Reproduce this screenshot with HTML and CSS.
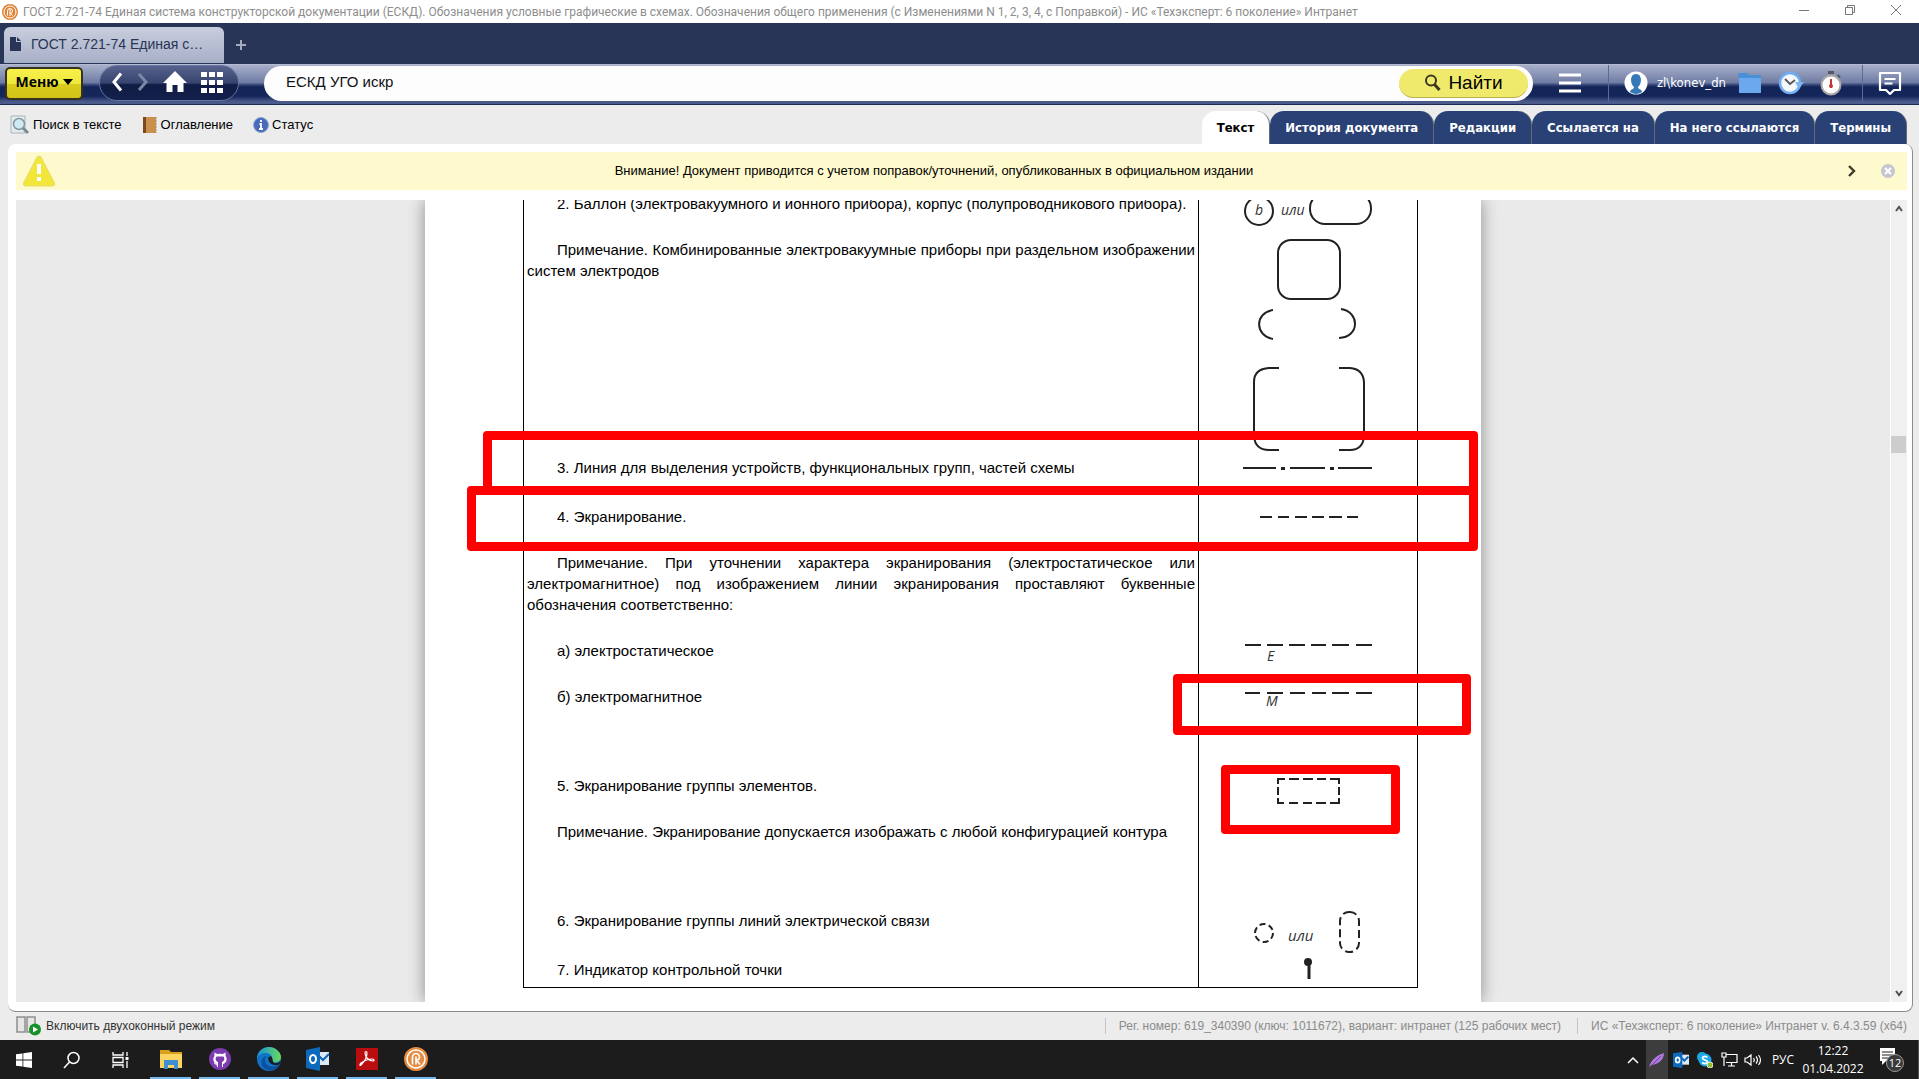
FILE: index.html
```html
<!DOCTYPE html>
<html lang="ru">
<head>
<meta charset="utf-8">
<meta name="viewport" content="width=device-width, initial-scale=1">
<title>ГОСТ 2.721-74 Единая система конструкторской документации (ЕСКД)</title>
<link rel="stylesheet" href="styles.css">
</head>
<body>
<header class="titlebar">
  <svg class="app-logo" width="16" height="16" viewBox="0 0 16 16" aria-hidden="true"><circle cx="8" cy="8" r="8" fill="#e0843a"/><circle cx="8" cy="8" r="6" fill="none" stroke="#fff" stroke-width="1"/><path d="M5.500 11.500V7a2.500 2.500 0 0 1 5 0q0 2-2 2l2 2.500M8 5v7" fill="none" stroke="#fff" stroke-width="1"/></svg>
  <h1 class="window-title">ГОСТ 2.721-74 Единая система конструкторской документации (ЕСКД). Обозначения условные графические в схемах. Обозначения общего применения (с Изменениями N 1, 2, 3, 4, с Поправкой) - ИС «Техэксперт: 6 поколение» Интранет</h1>
  <div class="window-controls">
    <button aria-label="Свернуть"><svg width="12" height="12" viewBox="0 0 12 12"><path d="M1 6.500h10" stroke="#777"/></svg></button>
    <button aria-label="Развернуть"><svg width="12" height="12" viewBox="0 0 12 12" fill="none" stroke="#777"><path d="M1.500 3.500h7v7h-7zM3.500 3.500v-2h7v7h-2"/></svg></button>
    <button aria-label="Закрыть"><svg width="12" height="12" viewBox="0 0 12 12"><path d="M1 1l10 10M11 1L1 11" stroke="#777"/></svg></button>
  </div>
</header>

<nav class="tabstrip" aria-label="Вкладки">
  <button class="app-tab"><svg width="11" height="14" viewBox="0 0 11 14"><path d="M0 0h6v5h5v9H0zM7 0l4 4H7z" fill="#283556"/></svg><span>ГОСТ 2.721-74 Единая с…</span></button>
  <button class="new-tab" aria-label="Новая вкладка"><svg width="12" height="12" viewBox="0 0 12 12"><path d="M6 1v10M1 6h10" stroke="#a5abba" stroke-width="2"/></svg></button>
</nav>

<div class="toolbar">
  <button class="menu-btn">Меню<svg width="10" height="6" viewBox="0 0 10 6"><path d="M0 0h10L5 6z" fill="#000"/></svg></button>
  <div class="nav-pill">
    <button aria-label="Назад"><svg width="12" height="20" viewBox="0 0 12 20"><path d="M10 1.500L3 10l7 8.500" fill="none" stroke="#fff" stroke-width="3"/></svg></button>
    <button aria-label="Вперёд"><svg width="12" height="20" viewBox="0 0 12 20"><path d="M2 2l7 8-7 8" fill="none" stroke="#7c87a8" stroke-width="3"/></svg></button>
    <button aria-label="Домой"><svg width="24" height="22" viewBox="0 0 24 22"><path d="M12 0l12 12h-3.500v9h-6v-7h-5v7h-6v-9H0z" fill="#fff"/></svg></button>
    <button aria-label="Разделы"><svg width="22" height="21" viewBox="0 0 22 21"><path d="M0 0h6v5H0zM8 0h6v5H8zM16 0h6v5h-6zM0 8h6v5H0zM8 8h6v5H8zM16 8h6v5h-6zM0 16h6v5H0zM8 16h6v5H8zM16 16h6v5h-6z" fill="#fff"/></svg></button>
  </div>
  <form class="search">
    <input type="text" value="ЕСКД УГО искр" aria-label="Поиск">
    <button type="button" class="find-btn"><svg width="18" height="18" viewBox="0 0 18 18"><circle cx="7" cy="6.500" r="5" fill="none" stroke="#3a3820" stroke-width="2"/><path d="M10.500 10.500l5 5.500" stroke="#3a3820" stroke-width="3"/></svg>Найти</button>
  </form>
  <button class="list-btn" aria-label="Список"><svg width="22" height="20" viewBox="0 0 22 20"><path d="M0 2h22M0 10h22M0 18h22" stroke="#fff" stroke-width="3"/></svg></button>
  <div class="user-box">
    <svg width="24" height="24" viewBox="0 0 24 24"><circle cx="12" cy="12" r="11.500" fill="#fff"/><path d="M6 21c0-3 4-2.500 4-5-4-3-4.500-13 2-13s6 10 2 13c0 2.500 4 2 4 5q-6 4-12 0z" fill="#3579b8"/></svg>
    <span class="user-name">zl\konev_dn</span>
    <button aria-label="Папки"><svg width="24" height="22" viewBox="0 0 24 22"><path d="M0 2q0-1 1-1h8l2 2h11q1 0 1 1v17H1V6z" fill="#4a90d9"/><path d="M1 6h22v14q0 1-1 1H2q-1 0-1-1z" fill="#6ba8ee"/></svg></button>
    <button aria-label="История"><svg width="26" height="24" viewBox="0 0 26 24"><circle cx="12" cy="12" r="10" fill="#f4f7fc" stroke="#6fabef" stroke-width="2.500"/><path d="M17 11h9l-5 7zM12 22q7 0 10-6" fill="#7db5f3"/><path d="M7 8l5 5 5-4" fill="none" stroke="#555" stroke-width="1.800"/></svg></button>
    <button aria-label="На контроле"><svg width="22" height="25" viewBox="0 0 22 25"><path d="M8 0h6v3H8zM18 3l3 3-2 1-2-2z" fill="#55565f"/><circle cx="11" cy="14" r="9.500" fill="#fff" stroke="#aaa6a6" stroke-width="2"/><path d="M11 8v9" stroke="#c33" stroke-width="2"/><circle cx="11" cy="15" r="2" fill="#c33"/></svg></button>
  </div>
  <button class="chat-btn" aria-label="Сообщения"><svg width="24" height="24" viewBox="0 0 24 24" fill="none" stroke="#fff" stroke-width="2.200"><path d="M2 2h20v17h-6l-4 4-4-4H2z" stroke-linejoin="round"/><path d="M6.500 8h11M6.500 12.500h8" stroke-width="2"/></svg></button>
</div>

<div class="doc-bar">
  <div class="doc-tools">
    <button><svg width="20" height="20" viewBox="0 0 20 20"><path d="M1 1h14v17H1z" fill="#e4ebec" stroke="#a9b5b8"/><circle cx="9" cy="9" r="5.500" fill="#cfeaf3" stroke="#84979f" stroke-width="1.500"/><path d="M13 13l5 5" stroke="#7b8a94" stroke-width="3"/></svg>Поиск в тексте</button>
    <button><svg width="16" height="18" viewBox="0 0 16 18"><path d="M1 1h13v16H1z" fill="#c98f4c"/><path d="M1 1h3v16H1z" fill="#7a4a1c"/><path d="M14.500 1v16" stroke="#c8bca8" stroke-dasharray="2 1"/></svg>Оглавление</button>
    <button><svg width="16" height="16" viewBox="0 0 16 16"><circle cx="8" cy="8" r="7.500" fill="#4a6cb8" stroke="#8ea6d6"/><path d="M8 3v2M6.500 7H8v5M6 12h4" stroke="#fff" stroke-width="1.800" fill="none"/></svg>Статус</button>
  </div>
  <nav class="doc-tabs" aria-label="Разделы документа">
    <button class="active">Текст</button>
    <button>История документа</button>
    <button>Редакции</button>
    <button>Ссылается на</button>
    <button>На него ссылаются</button>
    <button>Термины</button>
  </nav>
</div>

<main class="panel">
  <div class="notice">
    <svg width="34" height="32" viewBox="0 0 34 32"><path d="M17 1q2 0 3 3l12 23q2 4-2 4H4q-4 0-2-4L14 4q1-3 3-3z" fill="#f3e63a" stroke="#e6dc6e"/><path d="M15 9h4v10h-4zM15 22h4v4h-4z" fill="#fff"/></svg>
    <p>Внимание! Документ приводится с учетом поправок/уточнений, опубликованных в официальном издании</p>
    <button aria-label="Далее"><svg width="10" height="12" viewBox="0 0 10 12"><path d="M2 1l5 5-5 5" fill="none" stroke="#3d3a2c" stroke-width="2.400"/></svg></button>
    <button aria-label="Закрыть уведомление"><svg width="16" height="16" viewBox="0 0 16 16"><circle cx="8" cy="8" r="7" fill="#c3c6cf"/><path d="M5 5l6 6M11 5l-6 6" stroke="#fff" stroke-width="2.200"/></svg></button>
  </div>
  <div class="viewer">
    <div class="canvas">
      <article class="page">
        <table class="symbols">
          <tbody>
          <tr class="row-balloon">
            <td><p>2. Баллон (электровакуумного и ионного прибора), корпус (полупроводникового прибора).</p><p>Примечание. Комбинированные электровакуумные приборы при раздельном изображении систем электродов</p></td>
            <td><svg class="figure" width="218" height="262" viewBox="0 0 218 262"><circle cx="60" cy="19" r="14"/><text x="56" y="23">b</text><text x="82" y="23">или</text><rect x="111" y="1" width="61" height="31" rx="15"/><rect x="79" y="48" width="62" height="59" rx="13"/><path d="M74 118C55 121 56 144 74 147M142 117C161 120 161 145 140 146M80 176H70Q55 177 55 190V244Q56 258 70 258H80M140 176H151Q164 177 165 190V244Q164 258 151 258H140"/></svg></td>
          </tr>
          <tr class="row-single">
            <td><p>3. Линия для выделения устройств, функциональных групп, частей схемы</p></td>
            <td><svg class="figure" width="218" height="30" viewBox="0 0 218 30"><path d="M44 12h33M91 12h35M139 12h34"/><path class="points" d="M82 11h4v3h-4zM131 11h4v3h-4z"/></svg></td>
          </tr>
          <tr class="row-shield">
            <td><p>4. Экранирование.</p><p>Примечание. При уточнении характера экранирования (электростатическое или электромагнитное) под изображением линии экранирования проставляют буквенные обозначения соответственно:</p><p>а) электростатическое</p><p>б) электромагнитное</p></td>
            <td><svg class="figure" width="218" height="210" viewBox="0 0 218 210"><path d="M61 12h12M79 12h11M96 12h12M113 12h12M130 12h13M148 12h11M46 140h16M68 140h16M90 140h16M112 140h15M133 140h17M157 140h16M46 188h15M68 188h16M91 188h15M113 188h14M133 188h17M157 188h16"/><text x="68" y="156">E</text><text x="67" y="201">M</text></svg></td>
          </tr>
          <tr class="row-group">
            <td><p>5. Экранирование группы элементов.</p><p>Примечание. Экранирование допускается изображать с любой конфигурацией контура</p></td>
            <td><svg class="figure" width="218" height="60" viewBox="0 0 218 60"><path d="M79 10V5h7M90 5h10M104 5h10M118 5h9M131 5h9v5M140 13v8M140 24v5h-9M127 29h-10M113 29h-9M99 29H90M85 29h-6v-5M79 21v-8"/></svg></td>
          </tr>
          <tr class="row-single">
            <td><p>6. Экранирование группы линий электрической связи</p></td>
            <td><svg class="figure" width="218" height="46" viewBox="0 0 218 46"><circle cx="65" cy="24" r="9" stroke-dasharray="6 3.400"/><text class="wide" x="89" y="32">или</text><rect x="141" y="3" width="19" height="40" rx="9" stroke-dasharray="8 4"/></svg></td>
          </tr>
          <tr class="row-last">
            <td><p>7. Индикатор контрольной точки</p></td>
            <td><svg class="figure" width="218" height="24" viewBox="0 0 218 24"><circle class="dot" cx="109" cy="4" r="3"/><path class="stem" d="M110 4v17"/></svg></td>
          </tr>
          </tbody>
        </table>
        <div class="mark mark-lines"></div>
        <div class="mark mark-shield"></div>
        <div class="mark mark-magnetic"></div>
        <div class="mark mark-group"></div>
      </article>
    </div>
    <div class="scrollbar">
      <button aria-label="Вверх"><svg width="8" height="8" viewBox="0 0 8 8"><path d="M1 6l3-4 3 4" fill="none" stroke="#505050" stroke-width="2"/></svg></button>
      <div class="track"><div class="thumb"></div></div>
      <button aria-label="Вниз"><svg width="8" height="8" viewBox="0 0 8 8"><path d="M1 2l3 4 3-4" fill="none" stroke="#505050" stroke-width="2"/></svg></button>
    </div>
  </div>
</main>

<footer class="statusbar">
  <button><svg width="26" height="20" viewBox="0 0 26 20"><path d="M1 1h8v15H1zM11 1h8v15h-8z" fill="#e6e6e6" stroke="#8e8e8e" stroke-width="1.500"/><circle cx="19" cy="13.500" r="6" fill="#169128"/><path d="M17 10.500l5 3-5 3z" fill="#fff"/></svg>Включить двухоконный режим</button>
  <p class="license">Рег. номер: 619_340390 (ключ: 1011672), вариант: интранет (125 рабочих мест)</p>
  <p>ИС «Техэксперт: 6 поколение» Интранет v. 6.4.3.59 (x64)</p>
</footer>

<div class="taskbar">
  <button class="sys" aria-label="Пуск"><svg width="16" height="16" viewBox="0 0 16 16"><path d="M0 2.300L6.500 1.400V7.600H0zM7.300 1.300L16 0v7.600H7.300zM0 8.400h6.500v6.200L0 13.700zM7.300 8.400H16V16l-8.700-1.300z" fill="#fff"/></svg></button>
  <button class="sys" aria-label="Поиск Windows"><svg width="18" height="18" viewBox="0 0 18 18"><circle cx="10.500" cy="7" r="5.500" fill="none" stroke="#fff" stroke-width="1.500"/><path d="M6.500 11L1 17" stroke="#fff" stroke-width="1.500"/></svg></button>
  <button class="sys" aria-label="Представление задач"><svg width="17" height="16" viewBox="0 0 17 16" fill="none" stroke="#fff" stroke-width="1.300"><path d="M1 0v3h10V0M1 16v-3h10v3M1 5.500h10v5H1zM15 0v4M15 9v7"/><path d="M13.500 5h3v3h-3z" fill="#fff" stroke="none"/></svg></button>
  <button class="app" aria-label="Проводник"><svg width="22" height="22" viewBox="0 0 22 22"><path d="M0 2h9l2 2h11v15H0z" fill="#d9a01e"/><path d="M0 6h22v14H0z" fill="#fcd462"/><path d="M4 12h14v9h-4v-4H8v4H4z" fill="#3f8fd2"/></svg></button>
  <button class="app" aria-label="GitHub"><svg width="22" height="22" viewBox="0 0 22 22"><circle cx="11" cy="11" r="11" fill="#7d3bb0"/><path d="M8 19v-3C4 15 3.500 10 5.500 8L5.300 4.600l3 1.500q2.700-.7 5.400 0l3-1.500-.2 3.400c2 2 1.500 7-2.500 8v3" fill="#fff"/><path d="M9 14c-3-1-3-5-1-5.500h6c2 .5 2 4.500-1 5.500v6H9z" fill="#7d3bb0"/><path d="M5 15l3 2" stroke="#fff"/></svg></button>
  <button class="app" aria-label="Edge"><svg width="24" height="24" viewBox="0 0 24 24"><defs><linearGradient id="edge" x1="0" y1="0" x2="1" y2="0"><stop offset="0" stop-color="#168fd9"/><stop offset="1" stop-color="#69dc5b"/></linearGradient></defs><circle cx="12" cy="12" r="12" fill="#1172c9"/><path d="M0 12C0 4 6 0 12 0s12 5 12 10c0 4-4 6-8 5-3-1-1-2-1-4 0-3-3-5-7-5-4 0-7 3-8 6z" fill="url(#edge)"/><path d="M8 12c0 8 7 9 14 6-3 5-9 7-14 4-6-4-4-13 2-13q-2 1-2 3z" fill="#0c519d"/><path d="M11 11q4-5 5 4 3 3 8-1-1 5-6 4-6 0-7-7z" fill="#1c1c1c"/></svg></button>
  <button class="app" aria-label="Outlook"><svg width="24" height="24" viewBox="0 0 24 24"><path d="M12 5h11v13H12z" fill="#dceaf8"/><path d="M13 9l4 4 6-6" fill="none" stroke="#0f64b3" stroke-width="2"/><path d="M0 3l14-3v24L0 21z" fill="#0c6abc"/><ellipse cx="7" cy="12" rx="3" ry="4" fill="none" stroke="#fff" stroke-width="2"/></svg></button>
  <button class="app" aria-label="Acrobat"><svg width="22" height="22" viewBox="0 0 22 22"><path d="M0 0h22v22H0z" fill="#b90d10"/><path d="M5 17C8 14 11 9 11 5c0-2-2-2-2 0 0 4 4 8 8 8 2 0 1-2-1-2-4 0-8 2-11 4-2 2-1 3 0 2z" fill="none" stroke="#fff" stroke-width="1.200"/></svg></button>
  <button class="app" aria-label="Техэксперт"><svg width="24" height="24" viewBox="0 0 24 24"><circle cx="12" cy="12" r="12" fill="#e68a3d"/><circle cx="12" cy="12" r="9" fill="none" stroke="#fff" stroke-width="1.500"/><path d="M8.500 17.500V10a3.500 3.500 0 0 1 7 0q0 3-3 3l3.500 4.500M12 9.500v8" fill="none" stroke="#fff" stroke-width="1.600"/></svg></button>
  <div class="tray">
    <button class="chevron" aria-label="Скрытые значки"><svg width="12" height="8" viewBox="0 0 12 8"><path d="M1 7l5-5 5 5" fill="none" stroke="#fff" stroke-width="1.500"/></svg></button>
    <button class="feather" aria-label="Перо"><svg width="16" height="16" viewBox="0 0 16 16"><path d="M0 15C2 8 8 3 15 1q0 6-6 10-4 2-7 2z" fill="#b07ae0"/><path d="M1 15L12 4" stroke="#6b3fa0"/></svg></button>
    <button aria-label="Почта"><svg width="16" height="16" viewBox="0 0 24 24"><path d="M12 4h12v15H12z" fill="#dceaf8"/><path d="M13 9l4 4 6-6" fill="none" stroke="#0f64b3" stroke-width="3"/><path d="M0 2l14-2v24L0 22z" fill="#0c6abc"/><ellipse cx="7" cy="12" rx="3" ry="4" fill="none" stroke="#fff" stroke-width="2.500"/></svg></button>
    <button aria-label="Skype"><svg width="16" height="16" viewBox="0 0 16 16"><circle cx="5" cy="5" r="5" fill="#1ca8e8"/><circle cx="8" cy="8" r="6.500" fill="#1ca8e8"/><path d="M10.500 5.500Q8 3.500 6 5t2 3 2 3-5-.5" fill="none" stroke="#fff" stroke-width="1.600"/><circle cx="13" cy="13" r="3" fill="#8fbf2f" stroke="#fff" stroke-width=".8"/></svg></button>
    <button aria-label="Сеть"><svg width="17" height="15" viewBox="0 0 17 15" fill="none" stroke="#fff" stroke-width="1.200"><path d="M5 2.500h11v8H5M10.500 10.500V14M7 14h7M1 1h4v4H1zM3 5v9"/></svg></button>
    <button aria-label="Громкость"><svg width="18" height="14" viewBox="0 0 18 14" fill="none" stroke="#fff" stroke-width="1.200"><path d="M1 5h2l4-3v10L3 9H1zM9.500 5q1.500 2 0 4M12 3.500q3 3.500 0 7M14.500 2q4 5 0 10"/></svg></button>
    <button class="lang">РУС</button>
    <div class="clock"><span>12:22</span><span>01.04.2022</span></div>
    <button class="notify" aria-label="Уведомления"><svg width="26" height="26" viewBox="0 0 26 26"><path d="M1 1h15v13H7l-4 4v-4H1z" fill="#fff"/><path d="M3 5h11M3 8h11M3 11h8" stroke="#1c1c1c"/><circle cx="16" cy="16" r="8.500" fill="#3a3a3a" stroke="#999"/><text x="16" y="20" text-anchor="middle">12</text></svg></button>
  </div>
</div>
</body>
</html>
```
FILE: styles.css
```css
* { box-sizing: border-box; }

body {
  margin: 0;
  min-height: 100vh;
  display: flex;
  flex-direction: column;
  background: #ececec;
  color: #000;
  font: 13px/16px "Liberation Sans", Arial, sans-serif;
}

button {
  display: inline-flex;
  align-items: center;
  justify-content: center;
  padding: 0;
  border: 0;
  background: none;
  color: inherit;
  font: inherit;
}

p, h1 { margin: 0; }
svg { flex: none; display: block; }

/* Window frame */
.titlebar {
  display: flex;
  align-items: center;
  height: 23px;
  padding-left: 2px;
  gap: 5px;
  background: #fff;
}
.window-title {
  flex: 1;
  overflow: hidden;
  white-space: nowrap;
  color: #8d8d8d;
  font: 12px/20px Roboto, "Noto Sans", sans-serif;
}
.window-controls { display: flex; padding-bottom: 3px; }
.window-controls button { width: 46px; height: 20px; }

.tabstrip {
  display: flex;
  align-items: flex-end;
  height: 41px;
  padding: 0 4px 1px;
  background: #283556;
}
.app-tab {
  justify-content: flex-start;
  gap: 10px;
  width: 220px;
  height: 36px;
  padding: 0 6px 2px;
  border-radius: 6px 6px 0 0;
  background: linear-gradient(#c9cedd, #a7afc8);
  color: #283556;
}
.app-tab span { font-size: 14px; }
.new-tab { width: 34px; height: 36px; }

/* Main toolbar */
.toolbar {
  display: flex;
  align-items: center;
  height: 41px;
  padding: 0 17px 3px 5px;
  border-top: 1px solid #b4bbd2;
  border-bottom: 1px solid #1b2b55;
  background: linear-gradient(#a7afca 0%, #6f7ca4 45%, #3d4c80 50%, #142558 56%, #14265a 80%, #4a5a8a 94%, #4a5a8a 100%);
}
.menu-btn {
  width: 78px;
  height: 33px;
  gap: 4px;
  padding-bottom: 2px;
  border: 2px solid #35331d;
  border-radius: 5px;
  background: linear-gradient(#f6f04a 0%, #efe83c 50%, #d9cc1c 51%, #d2c318 100%);
  font: bold 14px/20px "Open Sans", "Noto Sans", sans-serif;
}
.nav-pill {
  display: flex;
  align-items: center;
  gap: 14px;
  width: 140px;
  height: 36px;
  margin-left: 16px;
  padding: 0 0 2px 11px;
  border: 1px solid #66749f;
  border-radius: 18px;
  background: linear-gradient(#56628c 0%, #36446f 50%, #101c45 55%, #13204c 100%);
}
.search {
  flex: 1;
  display: flex;
  align-items: center;
  height: 35px;
  margin-left: 25px;
  padding: 0 5px 0 22px;
  border-radius: 18px;
  background: #fdfdfd;
}
.search input {
  flex: 1;
  min-width: 0;
  padding: 0 0 2px;
  border: 0;
  outline: 0;
  background: none;
  color: #111;
  font: 15px/20px "Liberation Sans", Arial, sans-serif;
}
.find-btn {
  width: 129px;
  height: 29px;
  gap: 6px;
  border-bottom: 1px solid #b7b04a;
  border-radius: 15px;
  background: #f0ea6c;
  font-size: 19px;
}
.list-btn { width: 75px; height: 37px; }
.user-box {
  display: flex;
  align-items: center;
  height: 37px;
  gap: 16px;
  padding: 0 20px 0 15px;
  border: solid #5d6a93;
  border-width: 0 1px;
  color: #fff;
}
.user-name {
  margin: 0 -4px 0 -7px;
  font: 13px/16px "DejaVu Sans Condensed", "DejaVu Sans", sans-serif;
}
.chat-btn { padding-left: 15px; }

/* Document bar */
.doc-bar {
  display: flex;
  justify-content: space-between;
  align-items: flex-end;
  height: 39px;
  padding: 0 12px 0 10px;
}
.doc-tools {
  display: flex;
  gap: 20px;
  height: 39px;
}
.doc-tools button { gap: 3px; }
.doc-tabs { display: flex; }
.doc-tabs button {
  height: 33px;
  padding: 0 15px;
  border-right: 1px solid #66686f;
  border-radius: 14px 14px 0 0;
  background: #2a4175;
  color: #fff;
  font: bold 13px/16px "DejaVu Sans Condensed", "DejaVu Sans", sans-serif;
}
.doc-tabs .active { background: #fff; color: #000; }

/* Content panel */
.panel {
  flex: 1;
  display: flex;
  flex-direction: column;
  margin: 0 6px 0 8px;
  padding: 8px 5px 9px 8px;
  border: solid #8b8b8b;
  border-width: 0 1px 1px 0;
  border-radius: 8px;
  background: #fff;
}
.notice {
  display: flex;
  align-items: center;
  height: 38px;
  padding: 0 11px 0 6px;
  background: #fffacd;
}
.notice p {
  flex: 1;
  padding-right: 22px;
  text-align: center;
}
.notice button { width: 36px; }
.notice button:last-child { width: 16px; margin-left: 10px; }
.viewer {
  flex: 1;
  display: flex;
  margin-top: 10px;
  background: #eaeaea;
}
.canvas {
  flex: 1;
  display: flex;
  justify-content: center;
  overflow: hidden;
}
.page {
  position: relative;
  width: 1056px;
  padding: 0 63px 14px 98px;
  background: #fff;
  box-shadow: 0 0 16px #0006;
}
.symbols {
  width: 100%;
  margin-top: -8px;
  border-collapse: collapse;
  table-layout: fixed;
}
.symbols td {
  padding: 1px 3px;
  border: solid #000;
  border-width: 0 1px;
  vertical-align: top;
  font-size: 15px;
  line-height: 21px;
}
.symbols tr:last-child td { border-bottom-width: 1px; }
.symbols td:last-child {
  width: 219px;
  padding: 0;
}
.symbols p {
  text-align: justify;
  text-indent: 30px;
}
.symbols p + p { margin-top: 25px; }
.row-balloon { height: 264px; }
.row-single { height: 49px; }
.row-shield { height: 269px; }
.row-group { height: 135px; }
.row-last { height: 29px; }

.figure {
  fill: none;
  stroke: #222;
  stroke-width: 2;
}
.figure text {
  fill: #333;
  stroke: none;
  font: italic 14px "Open Sans", "Noto Sans", sans-serif;
}
.figure .wide { font-size: 15px; }
.figure .dot { fill: #222; }
.figure .points { fill: #222; stroke: none; }
.figure .stem { stroke-width: 3; }

/* Red highlight frames drawn over the page */
.mark {
  position: absolute;
  border: 9px solid #f00;
  border-radius: 4px;
}
.mark-lines { left: 58px; top: 231px; width: 995px; height: 64px; }
.mark-shield { left: 42px; top: 286px; width: 1011px; height: 65px; }
.mark-magnetic { left: 748px; top: 474px; width: 298px; height: 61px; }
.mark-group { left: 796px; top: 565px; width: 179px; height: 69px; }

.scrollbar {
  display: flex;
  flex-direction: column;
  width: 17px;
  border-left: 1px solid #fff;
  background: #f0f0f0;
}
.scrollbar button { height: 18px; }
.track {
  flex: 1;
  padding: 218px 1px 0 0;
}
.thumb {
  height: 17px;
  background: #cdcdcd;
}

/* Status bar */
.statusbar {
  display: flex;
  align-items: center;
  height: 28px;
  padding: 0 12px 0 16px;
  color: #8b8b8b;
  font-size: 12px;
}
.statusbar button {
  gap: 4px;
  margin-right: auto;
  color: #333;
}
.statusbar p {
  padding-left: 13px;
  border-left: 1px solid #c4c4c4;
}
.statusbar .license { padding-right: 16px; }

/* Taskbar */
.taskbar {
  display: flex;
  height: 39px;
  background: #1c1c1c;
  color: #fff;
}
.taskbar .sys { width: 48px; }
.taskbar .app {
  width: 41px;
  margin-right: 8px;
  border-bottom: 2px solid #76b9ed;
}
.taskbar .sys + .app { margin-left: 6px; }
.tray {
  display: flex;
  margin-left: auto;
  padding-right: 3px;
  border-right: 1px solid #555;
  font: 12px/18px "Open Sans", "Noto Sans", sans-serif;
}
.tray button { width: 24px; }
.tray .chevron { width: 27px; }
.tray .feather { width: 22px; margin-right: 1px; background: #3d3d3d; }
.tray .lang { width: 36px; }
.clock {
  display: flex;
  flex-direction: column;
  justify-content: center;
  width: 64px;
  text-align: center;
}
.tray .notify { width: 46px; margin-left: 4px; }
.notify text {
  fill: #fff;
  font: 11px "Open Sans", sans-serif;
}
```
